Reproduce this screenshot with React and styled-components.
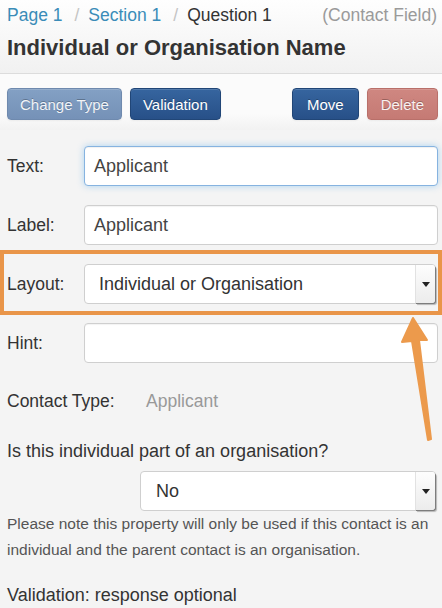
import React from 'react'
import styled, { createGlobalStyle } from 'styled-components'

const GlobalStyle = createGlobalStyle`
  html, body {
    margin: 0;
    padding: 0;
    background: #f4f4f4;
    font-family: "Liberation Sans", Arial, sans-serif;
    color: #333;
  }
`

const Page = styled.div`
  position: relative;
  width: 442px;
  height: 608px;
  overflow: hidden;
  background: #f4f4f4;
`

const Header = styled.div`
  padding: 2px 5px 9px 7px;
  background: linear-gradient(#fefefe, #f1f1f1);
  border-bottom: 1px solid #dcdcdc;
`

const Crumbs = styled.div`
  display: flex;
  align-items: center;
  height: 26px;
  font-size: 17.5px;
`

const Crumb = styled.span`
  color: ${p => (p.$active ? '#333' : '#3a8cb8')};
`

const Divider = styled.span`
  color: #c4c4c4;
  padding: 0 9px 0 12px;
`

const FieldKind = styled.span`
  margin-left: auto;
  color: #9a9a9a;
`

const Title = styled.h1`
  margin: 4px 0 0;
  font-size: 22px;
  line-height: 32px;
  font-weight: bold;
  color: #333;
`

const Toolbar = styled.div`
  display: flex;
  gap: 8px;
  padding: 14px 4px 10px 7px;
  background: linear-gradient(#fbfbfb 70%, #f2f2f2);
`

const Spacer = styled.div`
  flex: 1;
`

const palette = {
  muted: ['#83a0c4', '#7591b7', '#6f8aae'],
  primary: ['#36659f', '#275088', '#214677'],
  danger: ['#cf8781', '#c57a74', '#b9706a'],
}

const Button = styled.button`
  height: 32px;
  padding: 0 ${p => p.$pad || 12}px;
  border-radius: 4px;
  border: 1px solid ${p => palette[p.$kind][2]};
  background: linear-gradient(${p => palette[p.$kind][0]}, ${p => palette[p.$kind][1]});
  color: ${p => (p.$kind === 'primary' ? '#fff' : 'rgba(255,255,255,0.92)')};
  font-family: inherit;
  font-size: 15px;
  text-shadow: 0 -1px 0 rgba(0, 0, 0, 0.25);
  box-shadow: inset 0 1px 0 rgba(255, 255, 255, 0.15), 0 1px 2px rgba(0, 0, 0, 0.05);
`

const Form = styled.div`
  padding: 16px 4px 0 7px;
`

const Rows = styled.div`
  display: flex;
  flex-direction: column;
  gap: 19px;
`

const Row = styled.div`
  position: relative;
  display: flex;
  align-items: center;
  height: 40px;
`

const Label = styled.label`
  width: 77px;
  flex: none;
  font-size: 17.5px;
  color: #333;
`

const Input = styled.div`
  flex: 1;
  height: 40px;
  box-sizing: border-box;
  display: flex;
  align-items: center;
  padding: 0 9px;
  background: #fff;
  border: 1px solid ${p => (p.$focus ? '#86b3e0' : '#cfcfcf')};
  border-radius: 4px;
  font-size: 18px;
  color: #444;
  box-shadow: ${p =>
    p.$focus
      ? 'inset 0 1px 1px rgba(0,0,0,0.06), 0 0 7px rgba(82,168,236,0.45)'
      : 'inset 0 1px 1px rgba(0,0,0,0.05)'};
`

const Select = styled.div`
  flex: ${p => (p.$width ? 'none' : 1)};
  width: ${p => (p.$width ? `${p.$width}px` : 'auto')};
  margin-left: ${p => p.$offset || 0}px;
  margin-right: 2px;
  height: 40px;
  box-sizing: border-box;
  display: flex;
  align-items: stretch;
  background: #fff;
  border: 1px solid #cfcfcf;
  border-radius: 4px;
  font-size: 18px;
  color: #333;
`

const SelectValue = styled.div`
  flex: 1;
  display: flex;
  align-items: center;
  padding-left: ${p => p.$pad || 14}px;
`

const SelectButton = styled.div`
  width: 19px;
  display: flex;
  align-items: center;
  justify-content: center;
  border-left: 1px solid #e2e2e2;
  background: linear-gradient(#fdfdfd, #ececec);
  border-radius: 0 3px 3px 0;
  box-shadow: 1px 1px 0 #7d7d7d, 2px 2px 1px rgba(0, 0, 0, 0.25);
`

const Highlight = styled.div`
  position: absolute;
  top: -14px;
  bottom: -11px;
  left: -7px;
  right: -4px;
  border: 4px solid #e99549;
  pointer-events: none;
`

const Pair = styled.div`
  display: flex;
  margin-top: 25px;
  font-size: 17.5px;
  line-height: 26px;
`

const PairLabel = styled.span`
  width: 139px;
  color: #333;
`

const PairValue = styled.span`
  color: #999;
`

const Question = styled.div`
  margin-top: ${p => p.$top}px;
  font-size: ${p => p.$size || 18}px;
  line-height: 26px;
  color: ${p => p.$color || '#333'};
`

const SelectLine = styled.div`
  display: flex;
  margin-top: 7px;
`

const Pointer = styled.svg`
  position: absolute;
  left: 395px;
  top: 310px;
  pointer-events: none;
`

const Caret = () => (
  <svg width="8" height="5" viewBox="0 0 8 5">
    <path d="M0 0h8L4 5z" fill="#222" />
  </svg>
)

const Dropdown = ({ value, width, offset, pad }) => (
  <Select $width={width} $offset={offset}>
    <SelectValue $pad={pad}>{value}</SelectValue>
    <SelectButton>
      <Caret />
    </SelectButton>
  </Select>
)

const App = () => (
  <Page>
    <GlobalStyle />
    <Header>
      <Crumbs>
        <Crumb>Page 1</Crumb>
        <Divider>/</Divider>
        <Crumb>Section 1</Crumb>
        <Divider>/</Divider>
        <Crumb $active>Question 1</Crumb>
        <FieldKind>(Contact Field)</FieldKind>
      </Crumbs>
      <Title>Individual or Organisation Name</Title>
    </Header>
    <Toolbar>
      <Button $kind="muted">Change Type</Button>
      <Button $kind="primary">Validation</Button>
      <Spacer />
      <Button $kind="primary" $pad={14}>Move</Button>
      <Button $kind="danger" $pad={13}>Delete</Button>
    </Toolbar>
    <Form>
      <Rows>
        <Row>
          <Label>Text:</Label>
          <Input $focus>Applicant</Input>
        </Row>
        <Row>
          <Label>Label:</Label>
          <Input>Applicant</Input>
        </Row>
        <Row>
          <Label>Layout:</Label>
          <Dropdown value="Individual or Organisation" />
          <Highlight />
        </Row>
        <Row>
          <Label>Hint:</Label>
          <Input />
        </Row>
      </Rows>
      <Pair>
        <PairLabel>Contact Type:</PairLabel>
        <PairValue>Applicant</PairValue>
      </Pair>
      <Question $top={24}>Is this individual part of an organisation?</Question>
      <SelectLine>
        <Dropdown value="No" width={296} offset={133} pad={15} />
      </SelectLine>
      <Question $top={0} $size={15.5} $color="#555">
        Please note this property will only be used if this contact is an individual and the
        parent contact is an organisation.
      </Question>
      <Question $top={19}>Validation: response optional</Question>
    </Form>
    <Pointer width="45" height="135" viewBox="0 0 45 135">
      <polygon
        points="18,8 32,30 24,30 36,129 33,130 17,31 7,32"
        fill="#ec9a4c"
        stroke="#ec9a4c"
        strokeWidth="2"
        strokeLinejoin="round"
      />
    </Pointer>
  </Page>
)

export default App
